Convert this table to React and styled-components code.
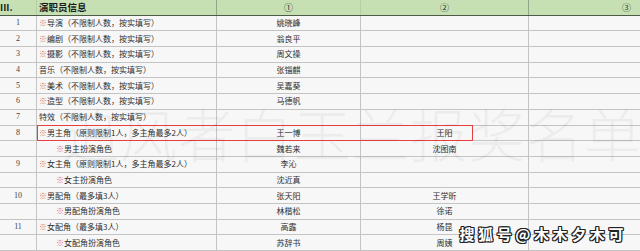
import React from 'react';
import styled, { createGlobalStyle } from 'styled-components';

const GlobalStyle = createGlobalStyle`
  html, body {
    margin: 0;
    padding: 0;
    background: #f7f7f7;
  }
  * {
    box-sizing: border-box;
  }
`;

const COLUMNS = '37px 180px 144px 168px 196px';

const Sheet = styled.div`
  position: relative;
  width: 640px;
  height: 251px;
  overflow: hidden;
  display: flex;
  flex-direction: column;
  background: #f7f7f7;
  font-family: 'Noto Sans CJK SC', 'Noto Sans', sans-serif;
  color: #2e2e2e;
`;

const HeaderRow = styled.div`
  display: grid;
  grid-template-columns: ${COLUMNS};
  height: 15.7px;
  flex: none;
  background: #c6e0b4;
  border-bottom: 1px solid #4c5a47;
`;

const HeadCell = styled.div`
  display: flex;
  align-items: center;
  justify-content: ${props => (props.center ? 'center' : 'flex-start')};
  padding-left: ${props => (props.center ? 0 : props.pad || 0)}px;
  border-right: 1px solid ${props => (props.strong ? '#8fa886' : '#b3cfa3')};
  font-size: 9.5px;
  font-weight: 700;
  color: #1a1a1a;
  white-space: nowrap;
  overflow: hidden;
`;

const Circled = styled.span`
  font-size: 9px;
  font-weight: 400;
  color: #333;
`;

const Row = styled.div`
  position: relative;
  display: grid;
  grid-template-columns: ${COLUMNS};
  flex: 1;
  border-bottom: 1px solid #c4c4c4;
`;

const Cell = styled.div`
  display: flex;
  align-items: center;
  justify-content: ${props => (props.center ? 'center' : 'flex-start')};
  padding-left: ${props => props.indent || 0}px;
  border-right: 1px solid #c4c4c4;
  font-size: 8px;
  line-height: 1;
  white-space: nowrap;
  overflow: hidden;
`;

const Num = styled(Cell)`
  font-family: 'Liberation Serif', 'DejaVu Serif', serif;
  font-size: 8px;
  color: #444;
`;

const Mark = styled.span`
  color: #e06a6a;
`;

const Highlight = styled.div`
  position: absolute;
  left: 37px;
  width: 436px;
  top: -1px;
  bottom: -1px;
  border: 1.5px solid #e5403f;
  pointer-events: none;
`;

const Watermark = styled.div`
  position: absolute;
  left: 62px;
  top: 104px;
  font-family: 'Noto Sans CJK SC', sans-serif;
  font-size: 57px;
  font-weight: 300;
  letter-spacing: 1px;
  line-height: 1;
  color: rgba(0, 0, 0, 0.042);
  white-space: nowrap;
  pointer-events: none;
`;

const Signature = styled.div`
  position: absolute;
  right: 13px;
  bottom: 10px;
  font-family: 'Noto Sans CJK SC', sans-serif;
  font-size: 15px;
  font-weight: 700;
  color: #fff;
  letter-spacing: 3.6px;
  line-height: 1;
  text-shadow:
    -1px 0 0 #222, 1px 0 0 #222, 0 -1px 0 #222, 0 1px 0 #222,
    -1px -1px 0 #222, 1px 1px 0 #222, -1px 1px 0 #222, 1px -1px 0 #222;
`;

const rows = [
  { no: '1', mark: true, label: '导演（不限制人数，按实填写）', a: '姚晓峰' },
  { no: '2', mark: true, label: '编剧（不限制人数，按实填写）', a: '翁良平' },
  { no: '3', mark: true, label: '摄影（不限制人数，按实填写）', a: '周文操' },
  { no: '4', label: '音乐（不限制人数，按实填写）', a: '张锱麒' },
  { no: '5', mark: true, label: '美术（不限制人数，按实填写）', a: '吴嘉葵' },
  { no: '6', mark: true, label: '造型（不限制人数，按实填写）', a: '马德帆' },
  { no: '7', label: '特效（不限制人数，按实填写）' },
  { no: '8', mark: true, label: '男主角（原则限制1人，多主角最多2人）', a: '王一博', b: '王阳', boxed: true },
  { sub: true, mark: true, label: '男主扮演角色', a: '魏若来', b: '沈图南' },
  { no: '9', mark: true, label: '女主角（原则限制1人，多主角最多2人）', a: '李沁' },
  { sub: true, mark: true, label: '女主扮演角色', a: '沈近真' },
  { no: '10', mark: true, label: '男配角（最多填3人）', a: '张天阳', b: '王学昕' },
  { sub: true, mark: true, label: '男配角扮演角色', a: '林楷松', b: '徐诺' },
  { no: '11', mark: true, label: '女配角（最多填3人）', a: '高露', b: '杨昆' },
  { sub: true, mark: true, label: '女配角扮演角色', a: '苏辞书', b: '周姨' },
];

const App = () => (
  <>
    <GlobalStyle />
    <Sheet>
      <HeaderRow>
        <HeadCell>III.</HeadCell>
        <HeadCell pad={2} strong>演职员信息</HeadCell>
        <HeadCell center><Circled>①</Circled></HeadCell>
        <HeadCell center strong><Circled>②</Circled></HeadCell>
        <HeadCell center><Circled>③</Circled></HeadCell>
      </HeaderRow>
      {rows.map((r, i) => (
        <Row key={i}>
          <Num center>{r.no || ''}</Num>
          <Cell indent={r.sub ? 19 : 2}>
            {r.mark && <Mark>※</Mark>}
            {r.label}
          </Cell>
          <Cell center>{r.a || ''}</Cell>
          <Cell center>{r.b || ''}</Cell>
          <Cell />
          {r.boxed && <Highlight />}
        </Row>
      ))}
      <Watermark>追风者白玉兰报奖名单</Watermark>
      <Signature>搜狐号@木木夕木可</Signature>
    </Sheet>
  </>
);

export default App;
